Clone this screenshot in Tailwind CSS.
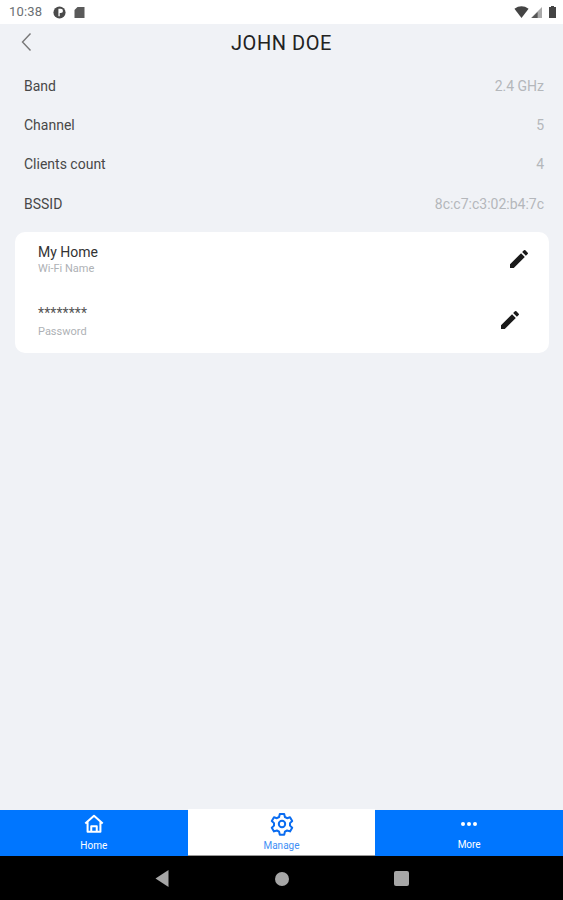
<!DOCTYPE html>
<html lang="en">

<head>
    <meta charset="UTF-8">
    <title>John Doe</title>
    <script src="https://cdn.jsdelivr.net/npm/@tailwindcss/browser@4"></script>
    <meta name="viewport" content="width=device-width, initial-scale=1.0">
</head>

<body class="bg-[#f0f2f6] font-['Roboto',sans-serif] overflow-hidden">
    <div class="h-[900px] flex flex-col">

        <!-- Status bar -->
        <div class="h-6 bg-white flex items-center justify-between pl-[9px] pr-[7px] shrink-0">
            <div class="flex items-center">
                <span class="text-[13px] text-[#6b6f73] tracking-[0.2px]">10:38</span>
                <svg class="w-[13px] h-[13px] ml-[11px]" viewBox="0 0 12 12"><circle cx="6" cy="6" r="5.6" fill="#4a4a4a"/><path d="M5 2.500h2.200a2 2 0 0 1 0 4H6.200V9.500H5z" fill="#fff"/></svg>
                <svg class="w-[11px] h-[11px] ml-[8px]" viewBox="0 0 10 11"><path d="M3 0h7v11H0V3z" fill="#5a5a5a"/></svg>
            </div>
            <div class="flex items-center">
                <svg class="w-[15px] h-[12px]" viewBox="0 0 13 11"><path d="M0 2.500Q6.500 -2 13 2.500L6.500 11z" fill="#444"/></svg>
                <svg class="w-[11px] h-[11px] ml-[2px]" viewBox="0 0 10 10"><path d="M10 0v10H0z" fill="#aaa"/><path d="M6 4.500v5.500H0.500z" fill="#555"/></svg>
                <svg class="w-[7px] h-[12px] ml-[7px]" viewBox="0 0 7 12"><path d="M2 0h3v1h2v11H0V1h2z" fill="#444"/></svg>
            </div>
        </div>

        <!-- Header -->
        <div class="relative h-[37px] flex items-center justify-center shrink-0">
            <svg class="absolute left-[20px] top-[8px] w-[12px] h-[20px]" viewBox="0 0 12 20" fill="none"><path d="M10.500 1.500L2.500 10l8 8.500" stroke="#777" stroke-width="1.400"/></svg>
            <h1 class="text-[20px] text-[#222] tracking-[0.55px] mt-[1px]">JOHN DOE</h1>
        </div>

        <!-- Details -->
        <div class="pl-6 pr-[19px] pt-[5px] text-sm">
            <div class="h-[39.3px] flex items-center justify-between">
                <span class="text-[#484848]">Band</span><span class="text-[#b4b7bb]">2.4 GHz</span>
            </div>
            <div class="h-[39.3px] flex items-center justify-between">
                <span class="text-[#484848]">Channel</span><span class="text-[#b4b7bb]">5</span>
            </div>
            <div class="h-[39.3px] flex items-center justify-between">
                <span class="text-[#484848]">Clients count</span><span class="text-[#b4b7bb]">4</span>
            </div>
            <div class="h-[39.3px] flex items-center justify-between">
                <span class="text-[#484848]">BSSID</span><span class="text-[#b4b7bb]">8c:c7:c3:02:b4:7c</span>
            </div>
        </div>

        <!-- Wi-Fi card -->
        <div class="ml-[15px] mr-[14px] mt-[9px] h-[121px] bg-white rounded-[10px] pl-[23px] shrink-0">
            <div class="h-[61px] pt-[12px] pr-[20px] flex justify-between">
                <div>
                    <div class="text-sm leading-[17px] text-[#333]">My Home</div>
                    <div class="text-[11px] leading-[13px] mt-[1px] text-[#aeb1b5]">Wi-Fi Name</div>
                </div>
                <svg class="w-[24px] h-[24px] mt-[3px] -mr-[2px]" viewBox="0 0 24 24"><path d="M3 17.250V21h3.750L17.810 9.940l-3.750-3.750L3 17.250zM20.710 7.040a1 1 0 0 0 0-1.410l-2.340-2.340a1 1 0 0 0-1.410 0l-1.830 1.830 3.750 3.750 1.830-1.830z" fill="#1a1a1a"/></svg>
            </div>
            <div class="h-[60px] pt-[12px] pr-[29px] flex justify-between">
                <div>
                    <div class="text-sm leading-[17px] tracking-[0.1px] text-[#555]">********</div>
                    <div class="text-[11px] leading-[13px] mt-[3px] text-[#aeb1b5]">Password</div>
                </div>
                <svg class="w-[24px] h-[24px] mt-[3px] -mr-[2px]" viewBox="0 0 24 24"><path d="M3 17.250V21h3.750L17.810 9.940l-3.750-3.750L3 17.250zM20.710 7.040a1 1 0 0 0 0-1.410l-2.340-2.340a1 1 0 0 0-1.410 0l-1.830 1.830 3.750 3.750 1.830-1.830z" fill="#1a1a1a"/></svg>
            </div>
        </div>

        <div class="flex-1"></div>

        <!-- Tab bar -->
        <div class="h-[46px] grid grid-cols-3 bg-[#0076ff] text-[10px] shrink-0">
            <div class="flex flex-col items-center text-white">
                <svg class="w-[22px] h-[22px] mt-[3px]" viewBox="0 0 24 24" fill="none" stroke="#fff" stroke-width="2.200" stroke-linejoin="round"><path d="M2.500 11.500L12 3l9.500 8.500M5 10v10.500h14V10"/><path d="M9 20.500v-6h6v6"/></svg>
                <span class="leading-[13px] mt-[4px]">Home</span>
            </div>
            <div class="flex flex-col items-center bg-white text-[#3f8ff5] -mt-[1px] border-b border-[#999]">
                <svg class="w-[24px] h-[24px] mt-[3px] ml-[1px]" viewBox="0 0 24 24" fill="none" stroke="#0a6cf0" stroke-width="2" stroke-linejoin="round"><path d="M9.800 2h4.400l.7 3 2.200 1.200 2.900-.9 2.200 3.700-2.200 2.100v2.500l2.200 2.100-2.200 3.700-2.900-.9-2.200 1.200-.7 3H9.800l-.7-3-2.200-1.200-2.900.9-2.200-3.700 2.200-2.100v-2.500L1.800 9l2.200-3.700 2.900.9L9.100 5z"/><circle cx="12" cy="12" r="3.200"/></svg>
                <span class="leading-[13px] mt-[3px]">Manage</span>
            </div>
            <div class="flex flex-col items-center text-white">
                <div class="flex gap-[2px] mt-[12px]">
                    <span class="w-[4px] h-[4px] rounded-full bg-white"></span>
                    <span class="w-[4px] h-[4px] rounded-full bg-white"></span>
                    <span class="w-[4px] h-[4px] rounded-full bg-white"></span>
                </div>
                <span class="leading-[13px] mt-[12px]">More</span>
            </div>
        </div>

        <!-- Android nav -->
        <div class="h-[44px] bg-black relative shrink-0">
            <svg class="absolute left-[155px] top-[14px] w-[14px] h-[17px]" viewBox="0 0 14 17"><path d="M13.500 0v17L0.500 8.500z" fill="#a6a6a6"/></svg>
            <span class="absolute left-[275px] top-[16px] w-[14px] h-[14px] rounded-full bg-[#a6a6a6]"></span>
            <span class="absolute left-[394px] top-[15px] w-[15px] h-[15px] rounded-[2px] bg-[#a6a6a6]"></span>
        </div>
    </div>
</body>

</html>
